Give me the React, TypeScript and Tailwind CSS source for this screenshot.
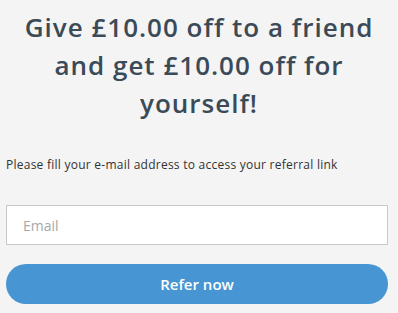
import React from "react";

export default function App() {
  return (
    <div className="w-[398px] h-[313px] bg-[#f4f4f4] overflow-hidden" style={{ fontFamily: '"Open Sans", "Liberation Sans", sans-serif' }}>
      <h1 className="pt-[8px] text-center text-[26px] leading-[38px] font-semibold text-[#3b4a57] tracking-[1px] px-3">
        Give £10.00 off to a friend and get £10.00 off for yourself!
      </h1>
      <p className="mt-[35px] ml-[6px] text-[12px] leading-[16px] font-medium text-[#333] tracking-[0.25px]">
        Please fill your e-mail address to access your referral link
      </p>
      <div className="mt-[32px] ml-[6px] w-[382px]">
        <input
          type="text"
          placeholder="Email"
          className="w-full h-[40px] bg-white border border-[#c8c8c8] px-[16px] text-[14px] placeholder:text-[#a8a8a8] outline-none"
        />
        <button className="mt-[19px] w-full h-[40px] rounded-full bg-[#4795d2] text-white text-[15px] font-semibold">
          Refer now
        </button>
      </div>
    </div>
  );
}
